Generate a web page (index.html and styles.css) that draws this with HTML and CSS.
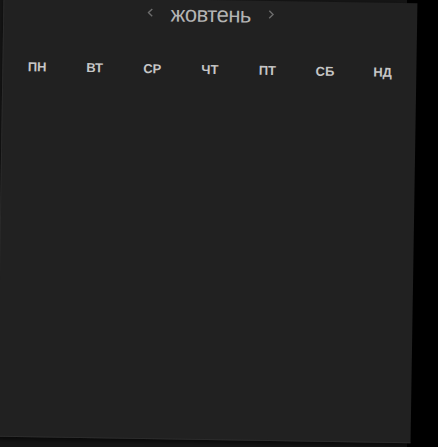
FILE: index.html
```html
<!DOCTYPE html>
<html lang="uk">
<head>
<meta charset="utf-8">
<title>Календар</title>
<link rel="stylesheet" href="styles.css">
</head>
<body>
<div class="stage">
  <section class="panel">
    <header class="month-nav">
      <button class="nav-btn" aria-label="Попередній місяць">
        <svg width="6" height="9" viewBox="0 0 6 9"><polyline points="5,0.8 1.2,4.5 5,8.2" fill="none" stroke="#6c6c6c" stroke-width="1.4"/></svg>
      </button>
      <h1 class="month-title">жовтень</h1>
      <button class="nav-btn" aria-label="Наступний місяць">
        <svg width="6" height="9" viewBox="0 0 6 9"><polyline points="1,0.8 4.8,4.5 1,8.2" fill="none" stroke="#6c6c6c" stroke-width="1.4"/></svg>
      </button>
    </header>
    <div class="weekdays">
      <span>ПН</span><span>ВТ</span><span>СР</span><span>ЧТ</span><span>ПТ</span><span>СБ</span><span>НД</span>
    </div>
  </section>
</div>
</body>
</html>
```

FILE: styles.css
```css
html, body {
  margin: 0;
  padding: 0;
  background: #000;
  height: 100%;
  overflow: hidden;
}

.stage {
  width: 407px;
  height: 447px;
  background: #151515;
}

.panel {
  width: 414px;
  height: 440px;
  box-sizing: border-box;
  background: #212121;
  border-left: 1px solid #2a2a2a;
  border-bottom: 1px solid #2c2c2c;
  box-shadow: 0 3px 4px rgba(0,0,0,0.5);
  transform: rotate(0.9deg);
  transform-origin: 50% 50%;
  font-family: "Liberation Sans", Arial, sans-serif;
}

.month-nav {
  display: flex;
  justify-content: center;
  align-items: center;
  gap: 17px;
  height: 30px;
  margin-top: 0;
}

.nav-btn {
  background: none;
  border: 0;
  padding: 0;
  width: 6px;
  height: 9px;
  display: flex;
  margin-top: -4px;
}

.month-title {
  margin: 0;
  font-weight: 400;
  font-size: 22px;
  letter-spacing: -0.5px;
  line-height: 30px;
  color: #b4b4b4;
}

.weekdays {
  display: grid;
  grid-template-columns: repeat(7, 1fr);
  padding: 32px 5px 0;
}

.weekdays span {
  text-align: center;
  font-size: 13px;
  font-weight: 700;
  line-height: 15px;
  color: #c6c6c6;
}
```
